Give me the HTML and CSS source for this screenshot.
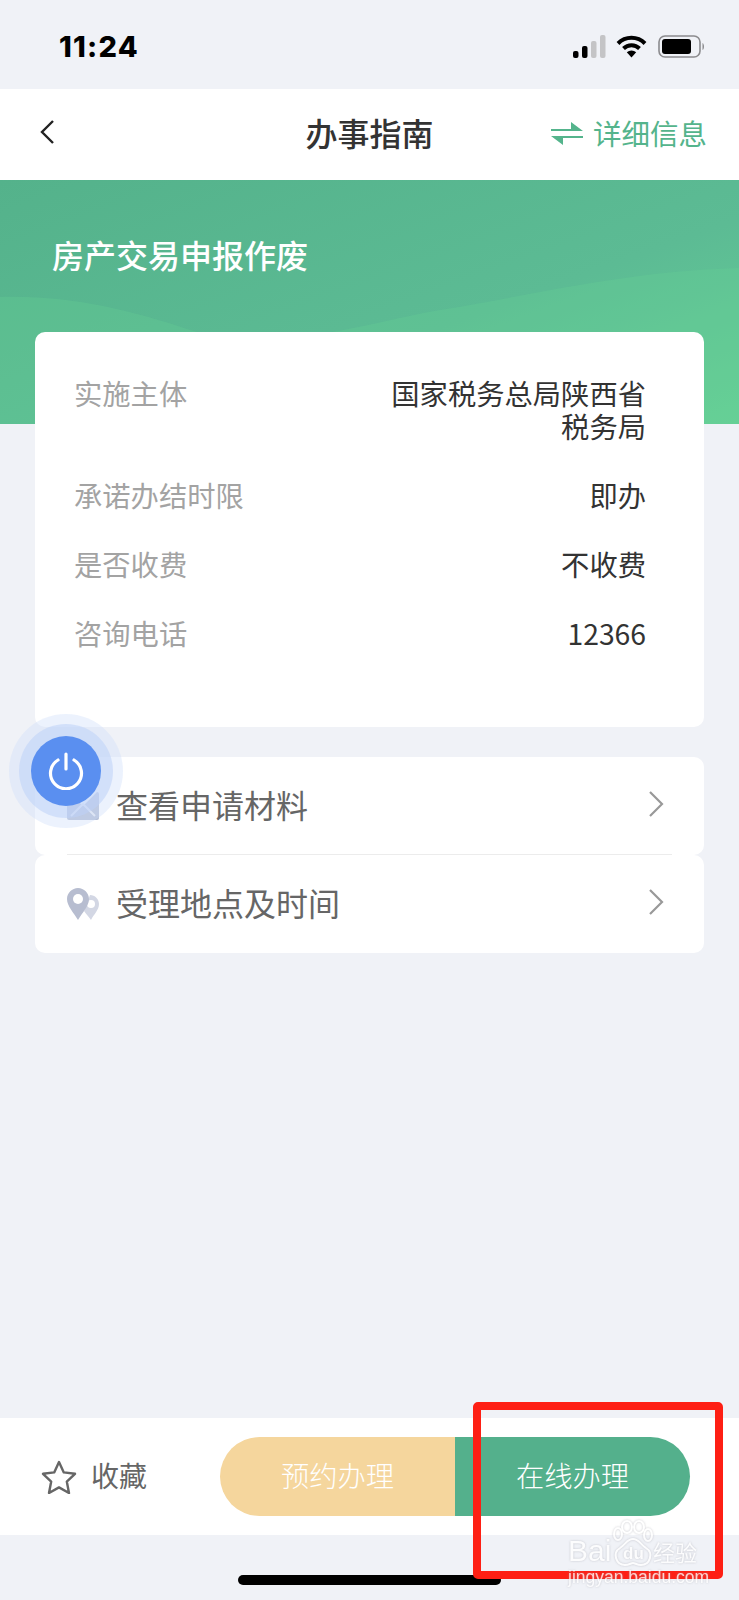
FILE: index.html
```html
<!DOCTYPE html>
<html lang="zh-CN">
<head>
    <meta charset="UTF-8">
    <meta name="viewport" content="width=device-width, initial-scale=1.0">
    <title>办事指南</title>
    <link rel="stylesheet" href="styles.css">
</head>
<body>
<div class="page">

    <div class="status-bar">
        <span class="time">11:24</span>
        <div class="status-icons">
            <svg class="signal" width="33" height="23" viewBox="0 0 33 23">
                <rect x="0" y="16" width="5.5" height="7" rx="2" fill="#000"/>
                <rect x="9" y="11" width="5.5" height="12" rx="2" fill="#000"/>
                <rect x="18" y="6" width="5.5" height="17" rx="2" fill="#c4c4c6"/>
                <rect x="27" y="0" width="5.5" height="23" rx="2" fill="#c4c4c6"/>
            </svg>
            <svg class="wifi" width="31" height="23" viewBox="0 0 31 23">
                <path d="M2 8.5 A19 19 0 0 1 29 8.5" fill="none" stroke="#000" stroke-width="4"/>
                <path d="M7.5 13.5 A11.5 11.5 0 0 1 23.5 13.5" fill="none" stroke="#000" stroke-width="4"/>
                <path d="M10.8 17.2 A7 7 0 0 1 20.2 17.2 L15.5 22.5 Z" fill="#000"/>
            </svg>
            <svg class="battery" width="47" height="23" viewBox="0 0 47 23">
                <rect x="1" y="1" width="41" height="21" rx="6" fill="none" stroke="#8b8b8e" stroke-width="1.6"/>
                <rect x="4" y="4" width="29" height="15" rx="3" fill="#000"/>
                <path d="M44.5 8 C46.5 9 46.5 14 44.5 15 Z" fill="#8b8b8e"/>
            </svg>
        </div>
    </div>

    <header class="top-nav">
        <svg class="back" width="14" height="24" viewBox="0 0 14 24">
            <path d="M13 1 L2 12 L13 23" fill="none" stroke="#222" stroke-width="2.4"/>
        </svg>
        <h1 class="nav-title">办事指南</h1>
        <div class="nav-more">
            <svg width="32" height="23" viewBox="0 0 32 23">
                <path d="M20 0 L32 9 H0 V7 H20 Z" fill="#54b48c"/>
                <path d="M12 23 L0 14 H32 V16 H12 Z" fill="#54b48c"/>
            </svg>
            <span>详细信息</span>
        </div>
    </header>

    <section class="hero">
        <svg class="hero-waves" width="739" height="244" viewBox="0 0 739 244" preserveAspectRatio="none">
            <path d="M0 117 C70 115 130 130 190 150 C270 176 370 142 440 130 C540 114 620 92 739 88 V244 H0 Z" fill="#66d096" opacity="0.3"/>
        </svg>
        <h2 class="hero-title">房产交易申报作废</h2>
    </section>

    <main class="content">
        <div class="card info-card">
            <div class="info-row">
                <span class="info-label">实施主体</span>
                <span class="info-value narrow">国家税务总局陕西省税务局</span>
            </div>
            <div class="info-row">
                <span class="info-label">承诺办结时限</span>
                <span class="info-value">即办</span>
            </div>
            <div class="info-row">
                <span class="info-label">是否收费</span>
                <span class="info-value">不收费</span>
            </div>
            <div class="info-row">
                <span class="info-label">咨询电话</span>
                <span class="info-value">12366</span>
            </div>
        </div>

        <div class="card link-card first">
            <svg class="link-icon" width="32" height="28" viewBox="0 0 32 28">
                <path d="M0 2 Q0 0 2 0 L16 14 L30 0 Q32 0 32 2 V26 Q32 28 30 28 H2 Q0 28 0 26 Z" fill="#b4bfd6"/>
                <path d="M4 24 L16 12 L28 24" fill="none" stroke="#e6e9f2" stroke-width="2"/>
            </svg>
            <span class="link-text">查看申请材料</span>
            <svg class="chevron" width="16" height="26" viewBox="0 0 16 26">
                <path d="M2 1 L14 13 L2 25" fill="none" stroke="#999" stroke-width="2.2"/>
            </svg>
        </div>
        <div class="card link-card second">
            <svg class="link-icon" width="32" height="32" viewBox="0 0 32 32">
                <path d="M23 7 C28 7 32 11 32 16 C32 22 27 26 24 32 C22 29 19 26 17 23 Z" fill="#d3d7e4"/>
                <circle cx="24" cy="16" r="4" fill="#fff"/>
                <path d="M11 0 C17 0 22 5 22 11 C22 18 15 25 11 32 C7 25 0 18 0 11 C0 5 5 0 11 0 Z" fill="#b7bdd0"/>
                <circle cx="11" cy="11" r="5" fill="#fff"/>
            </svg>
            <span class="link-text">受理地点及时间</span>
            <svg class="chevron" width="16" height="26" viewBox="0 0 16 26">
                <path d="M2 1 L14 13 L2 25" fill="none" stroke="#999" stroke-width="2.2"/>
            </svg>
        </div>
    </main>

    <footer class="bottom-bar">
        <div class="favorite">
            <svg width="36" height="34" viewBox="0 0 36 34">
                <path d="M18 2 L22.8 12.4 L34 13.8 L25.8 21.6 L28 33 L18 27.4 L8 33 L10.2 21.6 L2 13.8 L13.2 12.4 Z" fill="none" stroke="#666" stroke-width="2.4" stroke-linejoin="round"/>
            </svg>
            <span class="favorite-text">收藏</span>
        </div>
        <div class="actions">
            <div class="action reserve">预约办理</div>
            <div class="action online">在线办理</div>
        </div>
    </footer>

    <div class="home-area"><div class="home-bar"></div></div>

    <!-- 悬浮按钮 -->
    <div class="float-btn">
        <div class="float-ring">
            <div class="float-core">
                <svg width="38" height="38" viewBox="0 0 38 38">
                    <path d="M11 8 A15.5 15.5 0 1 0 27 8" fill="none" stroke="#fff" stroke-width="3.2" stroke-linecap="round"/>
                    <path d="M19 2 V17" fill="none" stroke="#fff" stroke-width="3.2" stroke-linecap="round"/>
                </svg>
            </div>
        </div>
    </div>

    <!-- 红框标注 -->
    <div class="mark-box"></div>

    <!-- 水印 -->
    <div class="watermark">
        <span class="wm-bai">Bai</span>
        <svg class="paw" width="44" height="46" viewBox="0 0 44 46">
            <g fill="none" stroke="#fff" stroke-width="2">
                <ellipse cx="7" cy="14" rx="4" ry="6"/>
                <ellipse cx="16" cy="7" rx="5" ry="6"/>
                <ellipse cx="28" cy="7" rx="5" ry="6"/>
                <ellipse cx="37" cy="15" rx="4" ry="6"/>
                <path d="M22 19 C16 19 15 24 9 28 C1 33 5 45 14 45 C18 45 20 43 22 43 C24 43 26 45 30 45 C39 45 43 33 35 28 C29 24 28 19 22 19 Z"/>
            </g>
        </svg>
        <span class="wm-du">du</span>
        <span class="wm-cn">经验</span>
        <div class="wm-url">jingyan.baidu.com</div>
    </div>

</div>
</body>
</html>
```

FILE: styles.css
```css
* {
    box-sizing: border-box;
}
body {
    margin: 0;
    background-color: #f0f2f7;
    font-family: "Noto Sans CJK SC", "Noto Sans", sans-serif;
}
.page {
    position: relative;
    width: 739px;
    height: 1600px;
    overflow: hidden;
    display: flex;
    flex-direction: column;
    background-color: #f0f2f7;
}

/* 状态栏 */
.status-bar {
    height: 89px;
    flex-shrink: 0;
    padding: 35px 34px 0 59px;
    display: flex;
    justify-content: space-between;
    align-items: flex-start;
}
.time {
    font-family: Inter, "Liberation Sans", sans-serif;
    font-size: 29px;
    font-weight: 800;
    letter-spacing: 1.2px;
    line-height: 24px;
    color: #000;
}
.status-icons {
    display: flex;
    align-items: center;
    gap: 10px;
}
.wifi {
    margin-right: 1px;
}

/* 导航 */
.top-nav {
    height: 91px;
    flex-shrink: 0;
    padding: 0 32px 0 40px;
    background-color: #fff;
    display: flex;
    align-items: center;
    position: relative;
}
.back {
    margin-top: -6px;
}
.nav-title {
    position: absolute;
    left: 0;
    right: 0;
    margin: 0;
    padding-bottom: 5px;
    text-align: center;
    font-size: 32px;
    font-weight: 500;
    color: #333;
}
.nav-more {
    margin-left: auto;
    display: flex;
    align-items: center;
    gap: 10px;
    font-size: 28.5px;
    color: #54b48c;
    position: relative;
}
.nav-more span {
    padding-bottom: 5px;
}
.nav-more svg {
    margin-top: -3px;
}

/* 绿色头图 */
.hero {
    height: 244px;
    flex-shrink: 0;
    position: relative;
    padding: 53px 0 0 52px;
    background: linear-gradient(160deg, #54b28b 0%, #5cbb94 60%, #66d097 100%);
}
.hero-waves {
    position: absolute;
    left: 0;
    top: 0;
}
.hero-title {
    position: relative;
    margin: 0;
    font-size: 32px;
    font-weight: 500;
    line-height: 42px;
    color: #fff;
}

.content {
    margin-top: -92px;
    padding: 0 35px;
    position: relative;
}
.card {
    background-color: #fff;
    border-radius: 10px;
}
.info-card {
    height: 395px;
    padding: 44px 58px 0 39px;
    margin-bottom: 30px;
    display: flex;
    flex-direction: column;
    gap: 36px;
}
.info-row {
    display: flex;
    justify-content: space-between;
    font-size: 28.3px;
    line-height: 33px;
}
.info-label {
    color: #a3a3a3;
}
.info-value {
    color: #333;
    text-align: right;
}
.info-value.narrow {
    width: 258px;
}

.link-card {
    height: 98px;
    padding: 0 40px 0 32px;
    display: flex;
    align-items: center;
    position: relative;
}
.link-card.first::after {
    content: "";
    position: absolute;
    left: 32px;
    right: 32px;
    bottom: 0;
    height: 1px;
    background-color: #ececec;
}
.link-icon {
    flex-shrink: 0;
}
.link-text {
    margin-left: 17px;
    padding-bottom: 4px;
    font-size: 32px;
    color: #666;
}
.chevron {
    margin-left: auto;
    margin-top: -4px;
}

/* 底部操作栏 */
.bottom-bar {
    margin-top: auto;
    height: 117px;
    flex-shrink: 0;
    padding: 0 49px 0 41px;
    background-color: #fff;
    display: flex;
    align-items: center;
    justify-content: space-between;
}
.favorite {
    display: flex;
    align-items: center;
    gap: 14px;
    font-size: 28px;
    color: #666;
}
.favorite-text {
    padding-bottom: 3px;
}
.actions {
    display: flex;
    height: 79px;
    width: 470px;
}
.action {
    display: flex;
    align-items: center;
    justify-content: center;
    padding-bottom: 4px;
    font-size: 28.3px;
    font-weight: 300;
    color: #fff;
}
.reserve {
    width: 235px;
    background-color: #f5d69d;
    border-radius: 40px 0 0 40px;
}
.online {
    width: 235px;
    background-color: #54b08c;
    border-radius: 0 40px 40px 0;
}
.home-area {
    height: 65px;
    flex-shrink: 0;
    padding-top: 40px;
}
.home-bar {
    width: 263px;
    height: 10px;
    margin-left: 238px;
    border-radius: 5px;
    background-color: #000;
}

/* 悬浮按钮 */
.float-btn {
    position: absolute;
    left: 9px;
    top: 714px;
    width: 114px;
    height: 114px;
    border-radius: 50%;
    background-color: rgba(208, 222, 250, 0.4);
    display: flex;
    align-items: center;
    justify-content: center;
}
.float-ring {
    width: 94px;
    height: 94px;
    border-radius: 50%;
    background-color: rgba(190, 210, 248, 0.55);
    display: flex;
    align-items: center;
    justify-content: center;
}
.float-core {
    width: 70px;
    height: 70px;
    border-radius: 50%;
    background-color: #5a8ff0;
    display: flex;
    align-items: center;
    justify-content: center;
}

/* 红框 */
.mark-box {
    position: absolute;
    left: 473px;
    top: 1402px;
    width: 250px;
    height: 177px;
    border: 8px solid #fe1f14;
    border-radius: 5px;
}

/* 水印 */
.watermark {
    position: absolute;
    left: 568px;
    top: 1520px;
    width: 135px;
    height: 66px;
    color: #fff;
    opacity: 0.8;
    filter: drop-shadow(0 0 1px rgba(150, 150, 160, 0.6));
}
.wm-bai {
    position: absolute;
    left: 0;
    top: 16px;
    font-family: "Liberation Sans", sans-serif;
    font-size: 30px;
    line-height: 30px;
}
.paw {
    position: absolute;
    left: 43px;
    top: 0;
}
.wm-du {
    position: absolute;
    left: 55px;
    top: 25px;
    font-family: "Liberation Sans", sans-serif;
    font-size: 17px;
    font-weight: 700;
    line-height: 18px;
}
.wm-cn {
    position: absolute;
    left: 85px;
    top: 17px;
    font-size: 22px;
    line-height: 28px;
    white-space: nowrap;
}
.wm-url {
    position: absolute;
    left: 0;
    top: 48px;
    font-family: "Liberation Sans", sans-serif;
    font-size: 17.5px;
    line-height: 18px;
    white-space: nowrap;
}
```
